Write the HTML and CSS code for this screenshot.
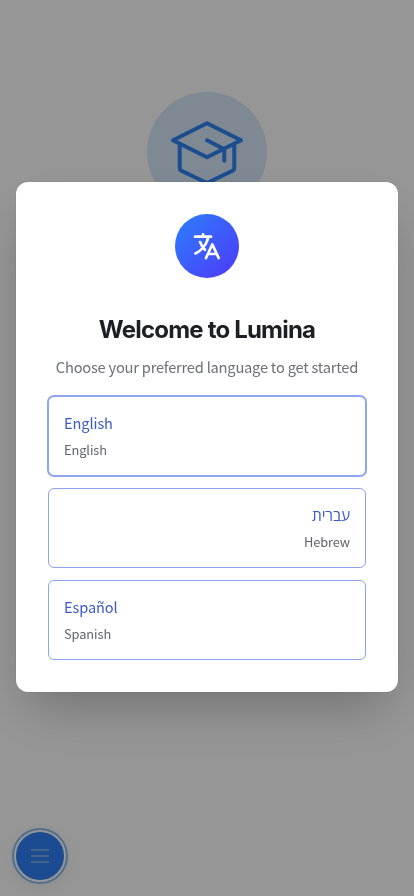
FILE: index.html
```html
<!DOCTYPE html>
<html lang="en">
<head>
<meta charset="utf-8">
<meta name="viewport" content="width=device-width, initial-scale=1">
<title>Lumina</title>
<link rel="stylesheet" href="styles.css">
</head>
<body>
<div class="page">
  <div class="hero">
    <svg viewBox="0 0 72 72" class="cap"><path d="M2 24.3 36 7.3l34 17-34 17ZM36 24.3l17.3 9v11.5M63.3 28v24a3 3 0 0 1-1.7 2.7L36 67 10.4 54.7A3 3 0 0 1 8.7 52V28"/></svg>
  </div>
  <button class="menu" aria-label="Menu"><svg viewBox="0 0 18 14"><path d="M0 1h18M0 7h18M0 13h18"/></svg></button>
</div>
<div class="overlay">
  <main class="dialog">
    <div class="badge">
      <svg viewBox="0 0 24 24"><path d="m11.2 21.1 4.8-10.3 4.8 10.3M12.7 18h6.6M3 5h12M9 5V3.2M13 5c-1.2 6-4.8 10.2-9.7 12.6M6.8 9c.8 2.3 2 4.2 3.7 5.8"/></svg>
    </div>
    <h1>Welcome to Lumina</h1>
    <p class="intro">Choose your preferred language to get started</p>
    <div class="options">
      <button class="option selected"><span class="name">English</span><span class="sub">English</span></button>
      <button class="option rtl"><span class="name hebrew" lang="he">עברית</span><span class="sub">Hebrew</span></button>
      <button class="option"><span class="name" lang="es">Español</span><span class="sub">Spanish</span></button>
    </div>
  </main>
</div>
</body>
</html>
```

FILE: styles.css
```css
* { box-sizing: border-box; }
body {
  margin: 0;
  background: #fafafa;
  font-family: "Noto Sans CJK JP", "Open Sans", sans-serif;
}
button { font: inherit; cursor: pointer; }
.page {
  height: 896px;
  padding: 92px 12px 12px;
  display: flex;
  flex-direction: column;
  justify-content: space-between;
  overflow: hidden;
}
.hero {
  width: 120px;
  height: 120px;
  border-radius: 50%;
  background: #d3e4f6;
  align-self: center;
  display: grid;
  justify-items: center;
  padding-top: 24px;
}
svg { fill: none; stroke: currentColor; stroke-linecap: round; stroke-linejoin: round; }
.cap { width: 72px; height: 72px; color: #2f80ed; stroke-width: 4; overflow: visible; }
.menu {
  width: 56px;
  height: 56px;
  padding: 2px;
  border: 2px solid #86b8ee;
  border-radius: 50%;
  background: #2d7ff2 content-box;
  box-shadow: 0 4px 14px rgba(0, 0, 0, .06);
  color: #8fb6e8;
  display: grid;
  place-items: center;
}
.menu svg { width: 18px; height: 14px; stroke-width: 1.6; }
.overlay {
  position: fixed;
  inset: 0;
  padding: 0 16px;
  background: rgba(0, 0, 0, .4);
  display: grid;
  grid-template-columns: minmax(0, 1fr);
  align-items: center;
}
.dialog {
  height: 510px;
  margin-top: -22px;
  padding: 32px;
  border-radius: 12px;
  background: #fff;
  box-shadow: 0 0 0 1px rgba(0, 0, 0, .04), 0 25px 50px -12px rgba(0, 0, 0, .25);
  display: flex;
  flex-direction: column;
  align-items: center;
}
.badge {
  width: 64px;
  height: 64px;
  flex: none;
  border-radius: 50%;
  background: linear-gradient(135deg, #2b7fff, #4f39f6);
  color: #fff;
  display: grid;
  place-items: center;
}
.badge svg { width: 32px; height: 32px; stroke-width: 2; }
h1 {
  margin: 36px 0 0;
  font: 700 24px/32px Inter, sans-serif;
  font-optical-sizing: none;
  letter-spacing: -.8px;
  color: #1c2024;
}
.intro {
  margin: 9px 0 17px;
  font-size: 14.7px;
  line-height: 24px;
  letter-spacing: -.24px;
  color: #6c7078;
  white-space: nowrap;
}
.options { width: 100%; display: grid; gap: 12px; }
.option {
  height: 80px;
  padding: 0 15px 2px;
  border: 1px solid #8da4ef;
  border-radius: 6px;
  background: #fff;
  display: flex;
  flex-direction: column;
  justify-content: center;
  align-items: flex-start;
  gap: 5px;
}
.selected { box-shadow: 0 0 0 1px #8da4ef; }
.rtl { align-items: flex-end; }
.name { font-size: 14.6px; line-height: 24px; letter-spacing: -.1px; color: #3a5bc7; }
.hebrew { font-family: "Open Sans", sans-serif; font-size: 15.5px; font-weight: 500; }
.sub { font-size: 12.8px; line-height: 20px; letter-spacing: -.08px; color: #60646c; }
```
